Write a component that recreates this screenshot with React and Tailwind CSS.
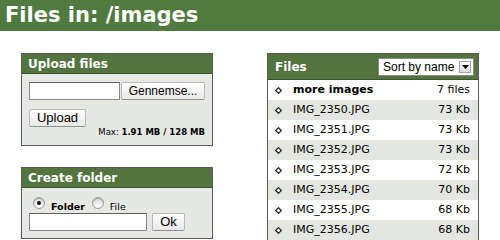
import React from 'react';

const files = [
  { name: 'IMG_2350.JPG', size: '73 Kb' },
  { name: 'IMG_2351.JPG', size: '73 Kb' },
  { name: 'IMG_2352.JPG', size: '73 Kb' },
  { name: 'IMG_2353.JPG', size: '72 Kb' },
  { name: 'IMG_2354.JPG', size: '70 Kb' },
  { name: 'IMG_2355.JPG', size: '68 Kb' },
  { name: 'IMG_2356.JPG', size: '68 Kb' },
];

const verdana = { fontFamily: '"DejaVu Sans", Verdana, sans-serif' };
const lucida = { fontFamily: '"Liberation Sans", Arial, sans-serif' };

function Diamond() {
  return (
    <svg width="7" height="7" viewBox="0 0 7 7" className="shrink-0">
      <path d="M3.5 0.7 L6.3 3.5 L3.5 6.3 L0.7 3.5 Z" fill="white" stroke="#222" strokeWidth="1.2" />
    </svg>
  );
}

function Radio({ checked }) {
  return (
    <span className="relative inline-block w-[12px] h-[12px] rounded-full border border-[#9a9a9a] bg-gradient-to-b from-[#d8d8d8] to-[#ffffff] shadow-[inset_0_1px_1px_rgba(0,0,0,0.25)]">
      {checked && <span className="absolute left-[3px] top-[3px] w-[4px] h-[4px] rounded-full bg-[#111]" />}
    </span>
  );
}

function Box({ title, children, className }) {
  return (
    <div className={`border border-[#5a5a5a] bg-[#e6e8e3] ${className || ''}`}>
      <div className="h-[20px] bg-[#53733f] border-b border-[#3d5530] px-[6px] flex items-center text-white font-bold text-[12px]" style={verdana}>
        {title}
      </div>
      {children}
    </div>
  );
}

function MacButton({ children, className }) {
  return (
    <div className={`h-[18px] flex items-center justify-center bg-gradient-to-b from-[#ffffff] to-[#e9e9e9] border border-[#b9b9b9] border-b-[#8f8f8f] rounded-[2px] text-[12px] text-black whitespace-nowrap ${className || ''}`} style={lucida}>
      {children}
    </div>
  );
}

export default function App() {
  return (
    <div className="w-[500px] h-[240px] overflow-hidden bg-white" style={verdana}>
      <div className="h-[31px] bg-[#517a40] flex items-center px-[5px]">
        <h1 className="text-white font-bold text-[21px] leading-none">Files in: /images</h1>
      </div>

      <div className="flex pl-[21px] pt-[22px] gap-[54px]">
        <div className="w-[192px] flex flex-col gap-[21px]">
          <Box title="Upload files" className="h-[93px]">
            <div className="px-[7px] pt-[8px]">
              <div className="flex">
                <div className="w-[91px] h-[18px] bg-white border border-[#8a8a8a] border-t-[#5f5f5f]" />
                <MacButton className="w-[84px] ml-[1px] text-[11.5px]">Gennemse...</MacButton>
              </div>
              <div className="flex items-start justify-between mt-[9px]">
                <MacButton className="w-[57px] text-[13px]">Upload</MacButton>
                <div className="text-[8.5px] mt-[19px] text-black leading-none pr-[0px] whitespace-nowrap">
                  Max: <b>1.91 MB / 128 MB</b>
                </div>
              </div>
            </div>
          </Box>

          <Box title="Create folder" className="h-[72px]">
            <div className="px-[7px] pt-[9px]">
              <div className="flex items-end h-[14px] text-[9.5px] text-black leading-none">
                <span className="ml-[4px] mb-[2px] flex"><Radio checked /></span>
                <span className="font-bold ml-[6px]">Folder</span>
                <span className="ml-[7px] mb-[2px] flex"><Radio /></span>
                <span className="ml-[6px]">File</span>
              </div>
              <div className="flex items-center mt-[2px]">
                <div className="w-[118px] h-[18px] bg-white border border-[#8a8a8a] border-t-[#5f5f5f]" />
                <MacButton className="w-[33px] ml-[5px] h-[16px] text-[13px]">Ok</MacButton>
              </div>
            </div>
          </Box>
        </div>

        <div className="w-[212px] border border-[#5a5a5a] h-[200px]">
          <div className="h-[26px] bg-[#53733f] border-b border-[#3d5530] pl-[7px] pr-[4px] flex items-center justify-between">
            <span className="text-white font-bold text-[12px]">Files</span>
            <div className="w-[96px] h-[18px] bg-white border border-[#8a8a8a] flex items-center justify-between pl-[4px] pr-[2px] whitespace-nowrap" style={lucida}>
              <span className="text-[12px] text-black">Sort by name</span>
              <span className="w-[12px] h-[12px] bg-gradient-to-b from-[#ffffff] to-[#dcdcdc] border border-[#a0a0a0] flex items-center justify-center">
                <svg width="7" height="4" viewBox="0 0 7 4"><path d="M0 0 L7 0 L3.5 4 Z" fill="#000" /></svg>
              </span>
            </div>
          </div>
          <div className="h-[20px] flex items-center pl-[7px] pr-[8px] bg-white text-[11px] text-black">
            <Diamond />
            <span className="font-bold ml-[11px]">more images</span>
            <span className="ml-auto">7 files</span>
          </div>
          {files.map((f, i) => (
            <div key={f.name} className={`h-[20px] flex items-center pl-[7px] pr-[8px] text-[11px] text-black ${i % 2 === 0 ? 'bg-[#e4e7e1]' : 'bg-white'}`}>
              <Diamond />
              <span className="ml-[11px]">{f.name}</span>
              <span className="ml-auto">{f.size}</span>
            </div>
          ))}
        </div>
      </div>
    </div>
  );
}
